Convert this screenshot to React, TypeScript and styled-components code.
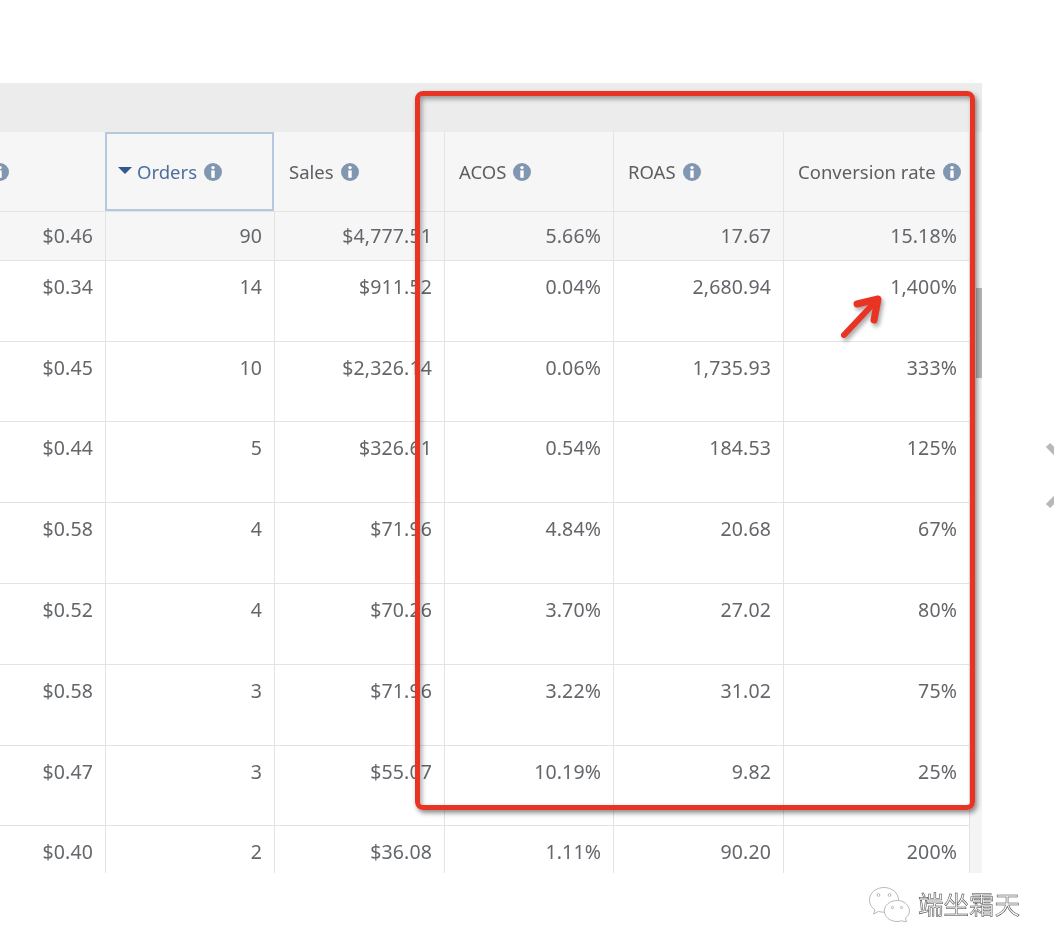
import { createGlobalStyle, styled } from 'styled-components';

const GlobalStyle = createGlobalStyle`
  html, body {
    margin: 0;
    padding: 0;
    background: #fff;
  }
  body {
    width: 1054px;
    height: 952px;
    overflow: hidden;
    font-family: "Noto Sans", "Liberation Sans", sans-serif;
  }
`;

const Page = styled.div`
  position: relative;
  width: 1054px;
  height: 952px;
  padding-top: 83px;
  box-sizing: border-box;
  overflow: hidden;
`;

const Panel = styled.div`
  width: 982px;
  height: 790px;
  display: flex;
  flex-direction: column;
  overflow: hidden;
  filter: blur(0.55px);
`;

const TopBand = styled.div`
  height: 49px;
  flex: none;
  background: #ececec;
`;

const Body = styled.div`
  flex: 1;
  display: flex;
  min-height: 0;
`;

const Table = styled.div`
  width: 970px;
  display: flex;
  flex-direction: column;
`;

const Row = styled.div<{ $height: number; $shaded?: boolean }>`
  height: ${(p) => p.$height}px;
  flex: none;
  box-sizing: border-box;
  display: grid;
  grid-template-columns: 106px 169px 170px 169px 170px 186px;
  background: ${(p) => (p.$shaded ? '#f6f6f6' : '#fff')};
  border-bottom: 1px solid #e3e3e3;
`;

const HeadCell = styled.div<{ $active?: boolean; $clipped?: boolean }>`
  display: flex;
  align-items: center;
  justify-content: ${(p) => (p.$clipped ? 'flex-end' : 'flex-start')};
  gap: 7px;
  padding: 0 ${(p) => (p.$clipped ? '96px' : '0')} 0 ${(p) => (p.$clipped ? '0' : p.$active ? '13px' : '14px')};
  margin: ${(p) => (p.$active ? '0 1px 0 -1px' : '0')};
  box-sizing: border-box;
  overflow: hidden;
  font-size: 18.5px;
  color: ${(p) => (p.$active ? '#4d6f9e' : '#5c5f62')};
  border-right: ${(p) => (p.$active ? 'none' : '1px solid #e3e3e3')};
  outline: ${(p) => (p.$active ? '2px solid #b6c8df' : 'none')};
  outline-offset: -2px;
`;

const Cell = styled.div<{ $total?: boolean }>`
  padding: ${(p) => (p.$total ? '12px' : '14px')} 12px 0 0;
  box-sizing: border-box;
  text-align: right;
  font-size: 19.5px;
  line-height: 24px;
  letter-spacing: 0.13px;
  color: #63666a;
  border-right: 1px solid #e3e3e3;
`;

const SortCaret = styled.span`
  width: 0;
  height: 0;
  margin-right: -2px;
  margin-top: -3px;
  border-left: 7px solid transparent;
  border-right: 7px solid transparent;
  border-top: 7px solid #31588f;
`;

const Scrollbar = styled.div`
  width: 12px;
  background: #f4f4f4;
  padding-top: 156px;
  display: flex;
  justify-content: flex-end;
  align-items: flex-start;
`;

const ScrollThumb = styled.div`
  width: 6px;
  height: 90px;
  background: #b4b4b4;
`;

const Highlight = styled.div`
  position: absolute;
  left: 415px;
  top: 91px;
  width: 560px;
  height: 719px;
  box-sizing: border-box;
  border: 5px solid #e93424;
  border-radius: 8px;
  box-shadow: 2px 3px 5px rgba(0, 0, 0, 0.45), inset 2px 3px 5px rgba(0, 0, 0, 0.35);
`;

const Arrow = styled.svg`
  position: absolute;
  left: 836px;
  top: 292px;
  filter: drop-shadow(2px 3px 2px rgba(0, 0, 0, 0.35));
`;

const CarouselChevron = styled.svg`
  position: absolute;
  left: 1040px;
  top: 436px;
`;

const Watermark = styled.div`
  display: flex;
  justify-content: flex-end;
  align-items: center;
  gap: 8px;
  width: 1020px;
  height: 62px;
`;

const WatermarkText = styled.span`
  font-family: "Noto Sans CJK SC", sans-serif;
  font-size: 25.5px;
  line-height: 30px;
  margin-top: -2px;
  color: #f4f4f4;
  -webkit-text-stroke: 0.5px #3c3c3c;
  filter: grayscale(1);
`;

const InfoIcon = () => (
  <svg width="18" height="18" viewBox="0 0 18 18" style={{ flex: 'none' }}>
    <circle cx="9" cy="9" r="9" fill="#8196b0" />
    <circle cx="9" cy="4.6" r="1.7" fill="#fff" />
    <rect x="7.3" y="7.4" width="3.4" height="7.4" fill="#fff" />
  </svg>
);

const WeChatIcon = () => (
  <svg width="41" height="35" viewBox="0 0 41 35" fill="#fff" stroke="#a8a8a8" strokeWidth="0.8">
    <path d="M15 .5C7 .5 .5 6 .5 13c0 4 2 7.500 5.500 9.800L4.500 27l5-2.600c1.700.5 3.500.8 5.500.8 8 0 14.500-5.300 14.500-12.200S23 .5 15 .5z" />
    <circle cx="9.500" cy="8" r="1.400" />
    <circle cx="20.500" cy="8" r="1.400" />
    <path d="M28 13.500c-7 0-12.700 4.700-12.700 10.500S21 34.500 28 34.500c1.500 0 3-.2 4.300-.7l5.200 1-1.200-3.700c2.700-1.900 4.200-4.400 4.200-7.100 0-5.800-5.500-10.500-12.500-10.500z" />
    <circle cx="23.500" cy="20.500" r="1.100" />
    <circle cx="32.500" cy="20.500" r="1.100" />
  </svg>
);

const columns = ['ACOS', 'ROAS', 'Conversion rate'];

const rows = [
  { height: 81, values: ['$0.34', '14', '$911.52', '0.04%', '2,680.94', '1,400%'] },
  { height: 80, values: ['$0.45', '10', '$2,326.14', '0.06%', '1,735.93', '333%'] },
  { height: 81, values: ['$0.44', '5', '$326.61', '0.54%', '184.53', '125%'] },
  { height: 81, values: ['$0.58', '4', '$71.96', '4.84%', '20.68', '67%'] },
  { height: 81, values: ['$0.52', '4', '$70.26', '3.70%', '27.02', '80%'] },
  { height: 81, values: ['$0.58', '3', '$71.96', '3.22%', '31.02', '75%'] },
  { height: 80, values: ['$0.47', '3', '$55.07', '10.19%', '9.82', '25%'] },
  { height: 50, values: ['$0.40', '2', '$36.08', '1.11%', '90.20', '200%'] },
];

const totals = ['$0.46', '90', '$4,777.51', '5.66%', '17.67', '15.18%'];

export default function App() {
  return (
    <Page>
      <GlobalStyle />
      <Panel>
        <TopBand />
        <Body>
          <Table>
            <Row $height={80} $shaded>
              <HeadCell $clipped>
                <InfoIcon />
              </HeadCell>
              <HeadCell $active>
                <SortCaret />
                Orders
                <InfoIcon />
              </HeadCell>
              <HeadCell>
                Sales
                <InfoIcon />
              </HeadCell>
              {columns.map((label) => (
                <HeadCell key={label}>
                  {label}
                  <InfoIcon />
                </HeadCell>
              ))}
            </Row>
            <Row $height={49} $shaded>
              {totals.map((value, i) => (
                <Cell key={i} $total>
                  {value}
                </Cell>
              ))}
            </Row>
            {rows.map((row, r) => (
              <Row key={r} $height={row.height}>
                {row.values.map((value, i) => (
                  <Cell key={i}>{value}</Cell>
                ))}
              </Row>
            ))}
          </Table>
          <Scrollbar>
            <ScrollThumb />
          </Scrollbar>
        </Body>
      </Panel>
      <Watermark>
        <WeChatIcon />
        <WatermarkText>端坐霜天</WatermarkText>
      </Watermark>
      <Highlight />
      <Arrow width="48" height="48" viewBox="0 0 48 48" fill="none" stroke="#e93424" strokeLinecap="round" strokeLinejoin="round">
        <path d="M8 43 L40 9" strokeWidth="6" />
        <path d="M21 12 L42 7 L38 28" strokeWidth="7" />
      </Arrow>
      <CarouselChevron width="14" height="80" viewBox="0 0 14 80" fill="none" stroke="#b8b8b8" strokeWidth="6">
        <path d="M8 9 L20 21" />
        <path d="M8 70 L20 58" />
      </CarouselChevron>
    </Page>
  );
}
